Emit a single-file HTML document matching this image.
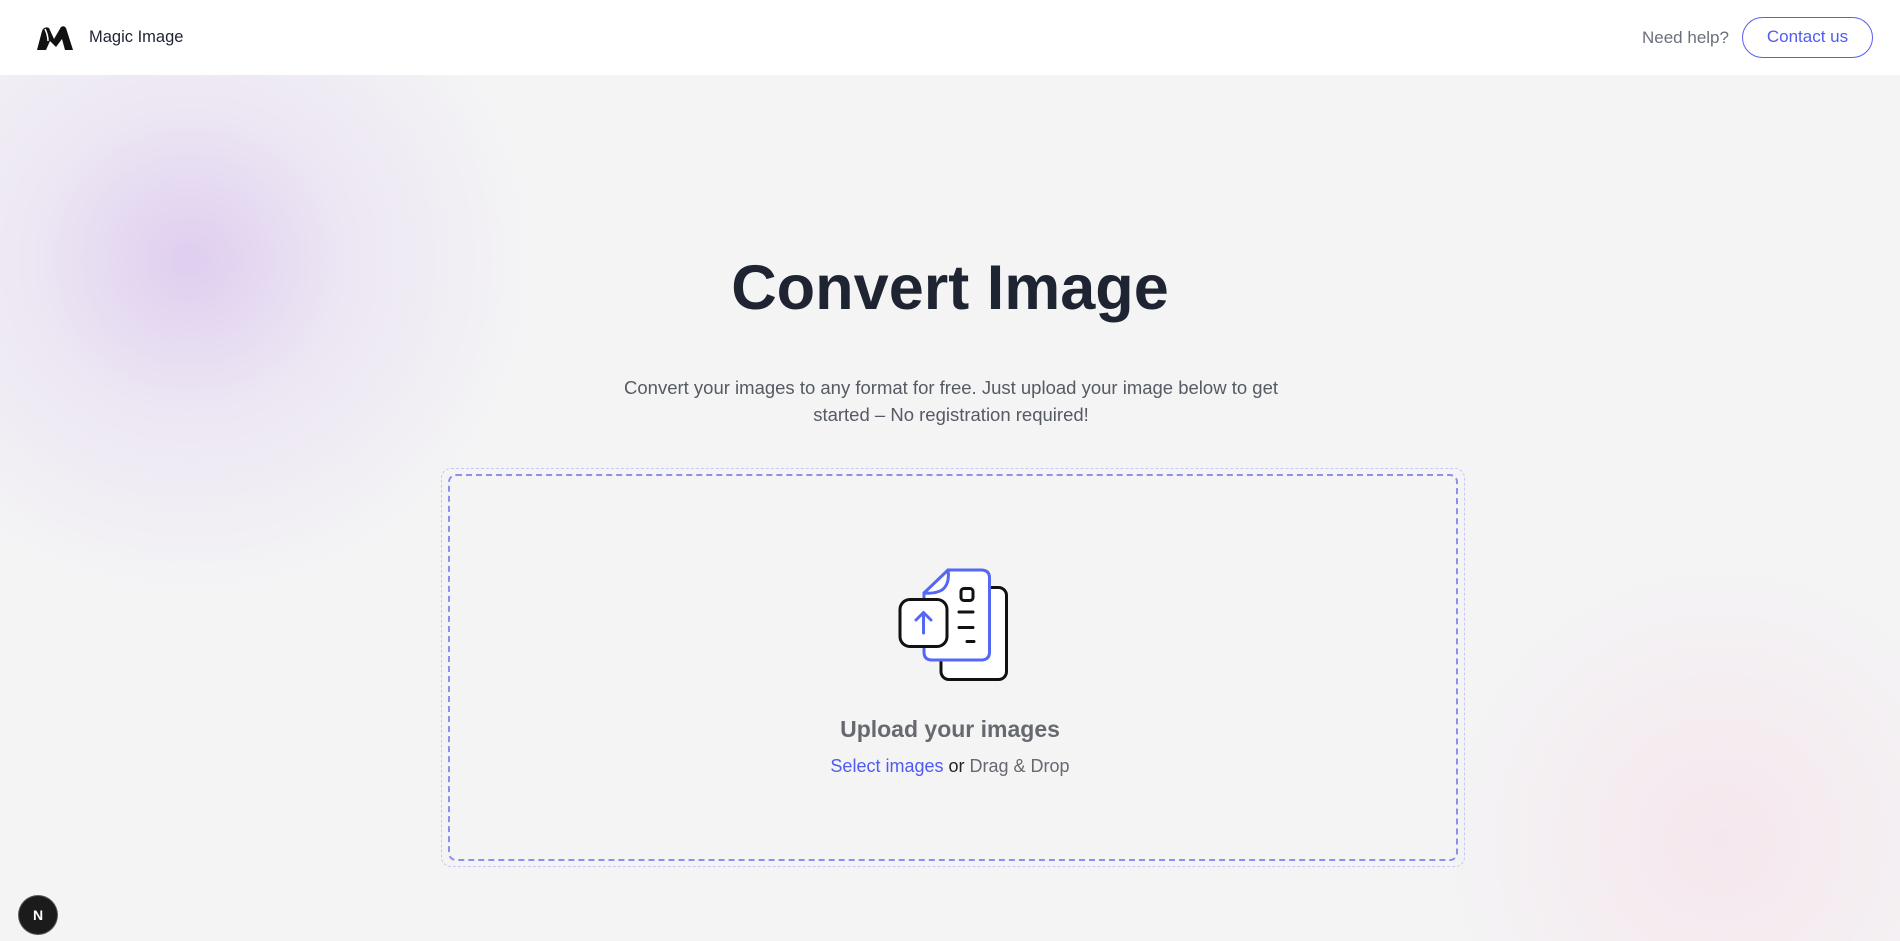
<!DOCTYPE html>
<html><head><meta charset="utf-8"><style>
*{margin:0;padding:0;box-sizing:border-box}
html,body{width:1900px;height:941px;overflow:hidden}
body{background:#f4f4f5;font-family:"Liberation Sans",sans-serif;position:relative}
.bg{position:absolute;left:0;top:0;width:1900px;height:941px;overflow:hidden}
.blob1{position:absolute;left:-160px;top:-80px;width:700px;height:680px;border-radius:50%;background:radial-gradient(closest-side,rgba(214,190,238,.7),rgba(226,210,240,.4) 45%,rgba(244,244,245,0) 100%)}
.blob2{position:absolute;left:1440px;top:560px;width:560px;height:560px;border-radius:50%;background:radial-gradient(closest-side,rgba(246,222,232,.6),rgba(244,244,245,0) 100%)}
header{position:absolute;left:0;top:0;width:1900px;height:75px;background:#fff}
.logo{position:absolute;left:36px;top:25px}
.brand{position:absolute;left:89px;top:28px;font-size:16.5px;color:#1f2432}
.help{position:absolute;left:1642px;top:28px;font-size:17px;color:#6b6f7a}
.btn{position:absolute;left:1742px;top:17px;width:131px;height:41px;border:1.5px solid #5460f2;border-radius:21px;color:#4f5bf0;font-size:17px;text-align:center;line-height:38px}
h1{position:absolute;left:0;width:1900px;top:252px;text-align:center;font-size:63px;font-weight:700;color:#1f2432}
.sub{position:absolute;left:600px;width:702px;top:374px;text-align:center;font-size:18.5px;line-height:27px;color:#555a63}
.dz1{position:absolute;left:441px;top:468px;width:1024px;height:399px;border:1.5px dashed #c6c8f7;border-radius:10px}
.dz2{position:absolute;left:448px;top:474px;width:1010px;height:387px;border:2px dashed #8a90ee;border-radius:8px}
.icon{position:absolute;left:860px;top:540px}
.up{position:absolute;left:0;width:1900px;top:716px;text-align:center;font-size:23px;font-weight:700;color:#666a70}
.sel{position:absolute;left:0;width:1900px;top:756px;text-align:center;font-size:18px;color:#666a70}
.sel b{font-weight:400;color:#4f5bf0}.sel i{font-style:normal;color:#222}
.n{position:absolute;left:19px;top:896px;width:38px;height:38px;border-radius:50%;background:#1b1b1b;color:#fff;font-size:14px;text-align:center;line-height:38px;font-weight:700;box-shadow:0 0 0 1px #555}
</style></head><body>
<div class="bg"><div class="blob1"></div><div class="blob2"></div></div>
<header>
<svg class="logo" width="38" height="26" viewBox="0 0 38 26"><path d="M1 25 L6 6 Q8 1 13 3 L18 14 L25 2 Q28 0 30 3 L37 25 L29 25 L26 14 L20 22 L14 16 L10 25 Z" fill="#111"/><path d="M9 4 Q12 10 12 16" stroke="#fff" stroke-width="1.5" fill="none"/></svg>
<div class="brand">Magic Image</div>
<div class="help">Need help?</div>
<div class="btn">Contact us</div>
</header>
<h1>Convert Image</h1>
<div class="sub">Convert your images to any format for free. Just upload your image below to get started – No registration required!</div>
<div class="dz1"></div><div class="dz2"></div>
<svg class="icon" width="180" height="160" viewBox="0 0 180 160" fill="none" stroke-linecap="round" stroke-linejoin="round">
<rect x="81" y="47.5" width="65.5" height="92" rx="8" fill="#fff" stroke="#111" stroke-width="3"/>
<path d="M88 30 H121 Q129.5 30 129.5 38 V112 Q129.5 120 121 120 H72 Q64 120 64 112 V53" fill="#fff" stroke="#5468f4" stroke-width="3"/>
<path d="M64 53 L88 30 Q90 44 82 50 Q75 54 64 53 Z" fill="#fff" stroke="#5468f4" stroke-width="3"/>
<rect x="101" y="48.5" width="12" height="12" rx="3" stroke="#111" stroke-width="3"/>
<path d="M99 72 H113 M99 87.5 H113 M107 101.5 H114" stroke="#111" stroke-width="3"/>
<rect x="40" y="59.5" width="47" height="47" rx="10" fill="#fff" stroke="#111" stroke-width="3"/>
<path d="M63.5 93 V73 M56 80 L63.5 72.5 L71 80" stroke="#5468f4" stroke-width="3"/>
</svg>
<div class="up">Upload your images</div>
<div class="sel"><b>Select images</b> <i>or</i> Drag &amp; Drop</div>
<div class="n">N</div>
</body></html>
